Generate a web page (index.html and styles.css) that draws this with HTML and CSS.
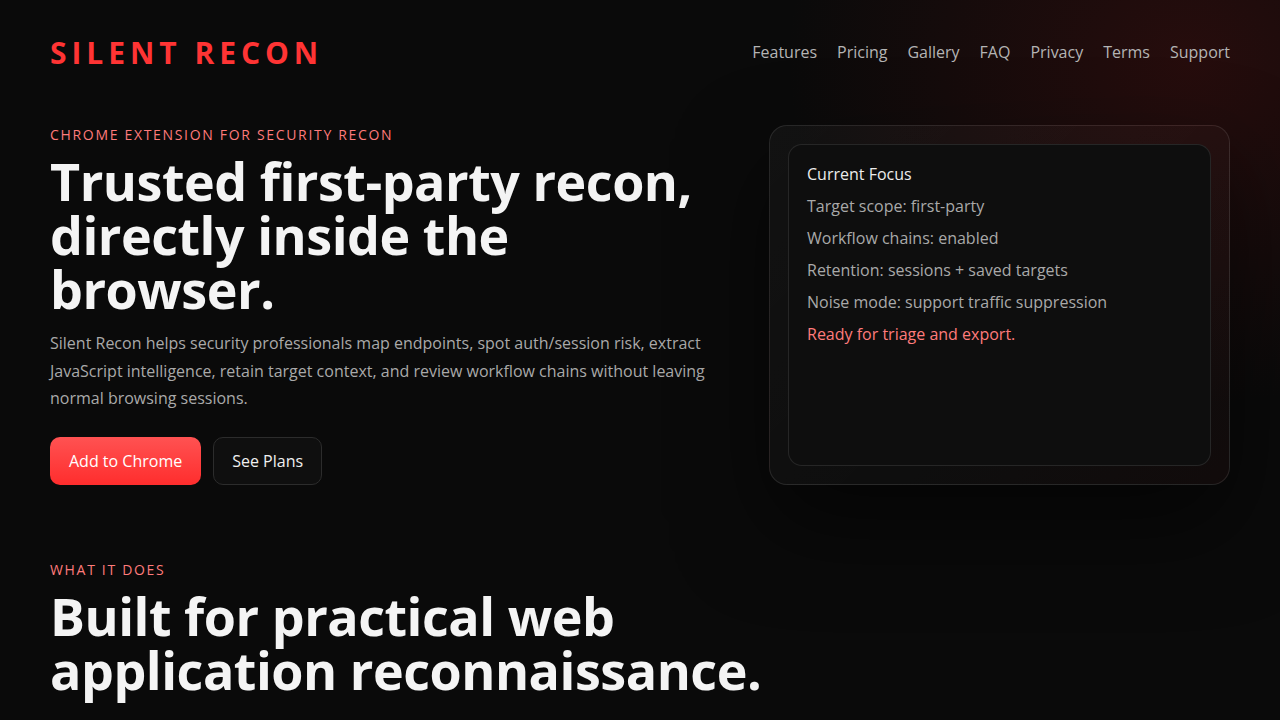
FILE: index.html
```html
<!DOCTYPE html>
<html lang="en">
<head>
	<meta charset="utf-8">
	<title>Silent Recon</title>
	<link rel="stylesheet" href="styles.css">
</head>
<body>

	<header class="top">
		<a class="logo" href="#">SILENT RECON</a>
		<nav class="nav">
			<a href="#features">Features</a>
			<a href="#pricing">Pricing</a>
			<a href="#gallery">Gallery</a>
			<a href="#faq">FAQ</a>
			<a href="#privacy">Privacy</a>
			<a href="#terms">Terms</a>
			<a href="#support">Support</a>
		</nav>
	</header>

	<section class="hero">
		<div class="hero-copy">
			<p class="eyebrow">Chrome extension for security recon</p>
			<h1 class="title">Trusted first-party recon, directly inside the browser.</h1>
			<p class="lead">Silent Recon helps security professionals map endpoints, spot auth/session risk, extract JavaScript intelligence, retain target context, and review workflow chains without leaving normal browsing sessions.</p>
			<div class="actions">
				<a class="btn btn-primary" href="#">Add to Chrome</a>
				<a class="btn btn-ghost" href="#pricing">See Plans</a>
			</div>
		</div>

		<div class="panel">
			<div class="panel-inner">
				<p class="panel-head">Current Focus</p>
				<p>Target scope: first-party</p>
				<p>Workflow chains: enabled</p>
				<p>Retention: sessions + saved targets</p>
				<p>Noise mode: support traffic suppression</p>
				<p class="panel-ok">Ready for triage and export.</p>
			</div>
		</div>
	</section>

	<section class="block" id="features">
		<p class="eyebrow">What it does</p>
		<h2 class="title title-wide">Built for practical web application reconnaissance.</h2>
	</section>

</body>
</html>
```

FILE: styles.css
```css
* {
	box-sizing: border-box;
	margin: 0;
	padding: 0;
}

html {
	background: #0a0a0a;
}

body {
	min-height: 100vh;
	padding: 0 50px;
	font-family: "Open Sans", "Noto Sans", sans-serif;
	color: #f2f2f2;
	background:
		radial-gradient(ellipse 560px 480px at 1190px 60px, rgba(120, 20, 20, 0.26), rgba(120, 20, 20, 0) 72%),
		#0a0a0a;
}

a {
	color: inherit;
	text-decoration: none;
}

/* header */

.top {
	display: flex;
	justify-content: space-between;
	align-items: center;
	height: 104px;
}

.logo {
	font-size: 30px;
	font-weight: 700;
	letter-spacing: 0.165em;
	color: #ff3434;
}

.nav {
	display: flex;
	gap: 20px;
	font-size: 16px;
	color: #b4b4b4;
}

/* hero */

.hero {
	display: grid;
	grid-template-columns: minmax(0, 1fr) 461px;
	gap: 48px;
	margin-top: 21px;
}

.eyebrow {
	font-size: 14px;
	line-height: 20px;
	letter-spacing: 0.12em;
	text-transform: uppercase;
	color: #ff7b7b;
}

.title {
	margin-top: 9px;
	font-size: 52px;
	line-height: 54px;
	font-weight: 700;
	letter-spacing: -0.009em;
	color: #f4f4f4;
}

.title-wide {
	max-width: 780px;
}

.lead {
	margin-top: 14px;
	max-width: 680px;
	font-size: 16px;
	line-height: 27.5px;
	color: #a9a9a9;
}

.actions {
	display: flex;
	gap: 12px;
	margin-top: 24px;
}

.btn {
	display: inline-flex;
	align-items: center;
	height: 48px;
	padding: 0 19px;
	border-radius: 10px;
	font-size: 16px;
}

.btn-primary {
	color: #fff;
	background: linear-gradient(180deg, #ff5252, #ff2d2d);
}

.btn-ghost {
	padding: 0 18px;
	color: #f0f0f0;
	background: #0f0f0f;
	border: 1px solid #2c2c2c;
}

/* status card */

.panel {
	padding: 18px;
	border-radius: 18px;
	border: 1px solid rgba(255, 255, 255, 0.1);
	background: linear-gradient(135deg, rgba(255, 255, 255, 0.035), rgba(255, 255, 255, 0.02) 60%, rgba(140, 30, 30, 0.06));
	box-shadow: 0 40px 90px rgba(0, 0, 0, 0.55);
}

.panel-inner {
	height: 100%;
	padding: 13px 18px;
	border-radius: 14px;
	border: 1px solid rgba(255, 255, 255, 0.1);
	background: #0e0e0e;
}

.panel-inner p {
	font-size: 16px;
	line-height: 32px;
	color: #a9a9a9;
}

.panel-inner .panel-head {
	color: #ececec;
}

.panel-inner .panel-ok {
	color: #ff7b7b;
}

/* features */

.block {
	padding-top: 75px;
}
```
